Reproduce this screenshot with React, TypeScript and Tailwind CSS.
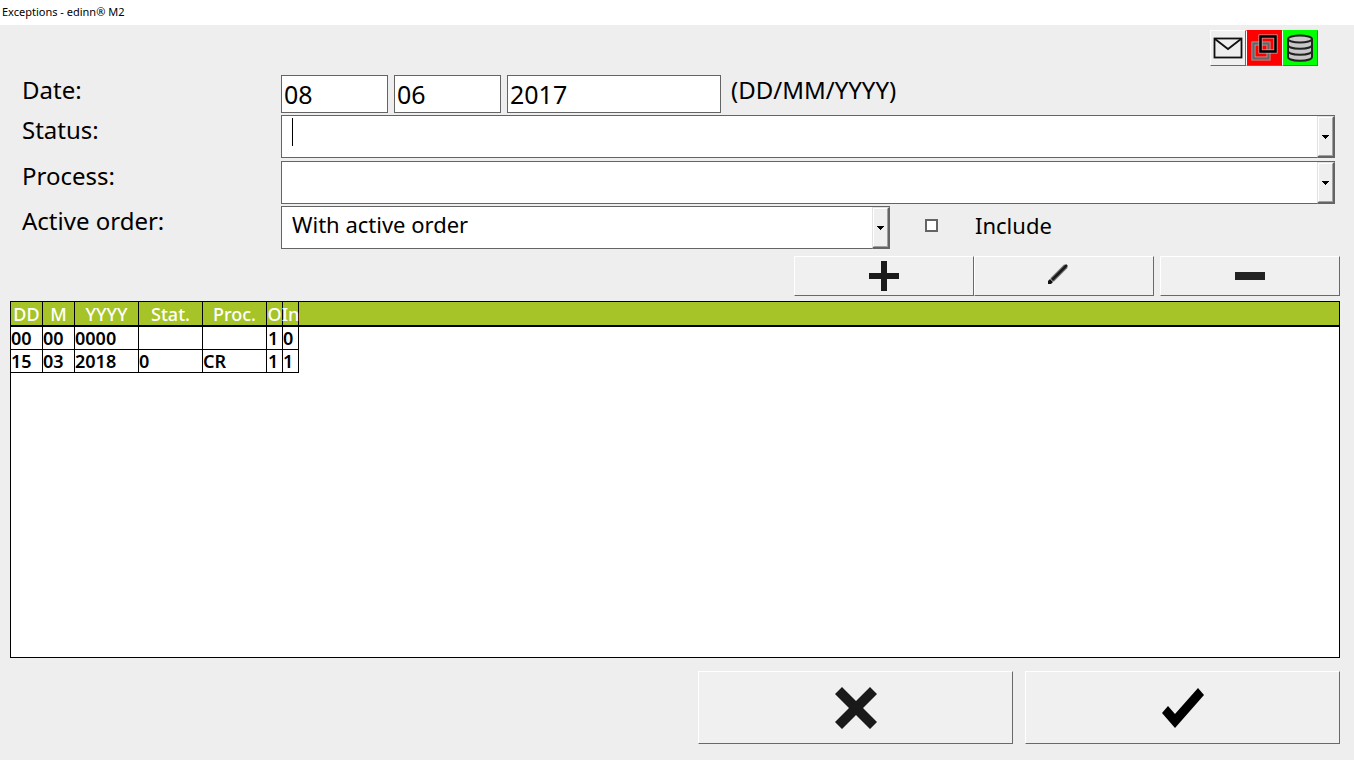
import { useState } from 'react';
import type { ReactNode } from 'react';
import clsx from 'clsx';

const columns = [
  { label: 'DD', width: 'w-[32px]' },
  { label: 'M', width: 'w-[32px]' },
  { label: 'YYYY', width: 'w-[64px]' },
  { label: 'Stat.', width: 'w-[64px]' },
  { label: 'Proc.', width: 'w-[64px]' },
  { label: 'O', width: 'w-[16px]' },
  { label: 'In', width: 'w-[16px]' },
];

const rows = [
  ['00', '00', '0000', '', '', '1', '0'],
  ['15', '03', '2018', '0', 'CR', '1', '1'],
];

const raised = 'border border-t-white border-l-white border-r-[#696969] border-b-[#696969]';

function PushButton({
  label,
  className,
  children,
}: {
  label: string;
  className?: string;
  children: ReactNode;
}) {
  return (
    <button
      type="button"
      aria-label={label}
      className={clsx('flex items-center justify-center', raised, className)}
    >
      {children}
    </button>
  );
}

function Combo({
  id,
  options,
  caret,
  className,
}: {
  id: string;
  options: string[];
  caret?: boolean;
  className?: string;
}) {
  return (
    <div className={clsx('relative h-[43px]', className)}>
      <select
        id={id}
        className="h-full w-full appearance-none border border-[#646464] bg-white pr-5 pb-2 pl-[10px] text-[22px] leading-8 outline-none"
      >
        {options.map((option) => (
          <option key={option}>{option}</option>
        ))}
      </select>
      {caret && <span className="absolute top-[3px] left-[11px] h-7 w-px bg-black" />}
      <span className="pointer-events-none absolute top-px right-0 bottom-0 w-[18px] border-t border-r-2 border-b-2 border-l border-t-[#e3e3e3] border-r-[#646464] border-b-[#646464] border-l-[#e3e3e3]">
        <span className="flex h-full w-full items-center justify-center border border-t-white border-r-[#a0a0a0] border-b-[#a0a0a0] border-l-white bg-[#efefef]">
          <svg width="7" height="4" viewBox="0 0 7 4" shapeRendering="crispEdges">
            <path d="M0 0h7v1h-1v1h-1v1h-1v1h-1v-1h-1v-1h-1v-1h-1z" fill="#000" />
          </svg>
        </span>
      </span>
    </div>
  );
}

function Toolbar() {
  return (
    <div className="flex justify-end pr-9">
      <PushButton label="Messages" className="size-9 bg-[#f0f0f0]">
        <svg width="30" height="22" viewBox="0 0 30 22" fill="none" stroke="#111">
          <rect x="1.5" y="1.5" width="27" height="19" fill="#eee" strokeWidth="1.8" />
          <path d="M2 2l13 10L28 2" strokeWidth="1.8" />
        </svg>
      </PushButton>
      <PushButton label="Windows" className="size-9 border-t-[#f00]! border-r-[#f00]! bg-[#f00]">
        <svg width="28" height="28" viewBox="0 0 28 28" fill="none">
          <rect x="3.5" y="9.5" width="15" height="15" stroke="#b9a0a0" strokeWidth="4" />
          <rect x="3.5" y="9.5" width="15" height="15" stroke="#666" strokeWidth="2.4" />
          <rect x="10.5" y="2.5" width="15" height="15" stroke="#c9b0b0" strokeWidth="4" />
          <rect x="10.5" y="2.5" width="15" height="15" stroke="#000" strokeWidth="2.6" />
        </svg>
      </PushButton>
      <PushButton label="Database" className="size-9 border-t-[#0f0]! bg-[#0f0]">
        <svg width="28" height="28" viewBox="0 0 28 28" stroke="#222" strokeWidth="2">
          <path d="M2 5v18c0 5 24 5 24 0V5" fill="#c8c8c8" />
          <ellipse cx="14" cy="5" rx="12" ry="3.5" fill="#ccc" />
          <path d="M2 11c0 5 24 5 24 0M2 17c0 5 24 5 24 0" fill="none" />
        </svg>
      </PushButton>
    </div>
  );
}

function ExceptionsTable() {
  return (
    <div className="mr-[14px] ml-[10px] min-h-[200px] flex-1 border border-black bg-white">
      <table className="w-full table-fixed border-separate border-spacing-0 text-[18px] leading-5 whitespace-nowrap">
        <thead>
          <tr className="h-[25px] bg-[#a6c428] text-white">
            {columns.map((column) => (
              <th
                key={column.label}
                scope="col"
                className={clsx(
                  'border-r border-b-2 border-black p-0 text-center font-medium',
                  column.width,
                )}
              >
                <span className="flex justify-center">{column.label}</span>
              </th>
            ))}
            <td className="border-b-2 border-black p-0" />
          </tr>
        </thead>
        <tbody>
          {rows.map((row, i) => (
            <tr key={i} className="h-[23px]">
              {row.map((value, j) => (
                <td
                  key={j}
                  className={clsx(
                    'border-r border-b border-black p-0 font-semibold',
                    j === 5 && 'pl-px',
                  )}
                >
                  {value}
                </td>
              ))}
            </tr>
          ))}
        </tbody>
      </table>
    </div>
  );
}

export default function App() {
  const [date, setDate] = useState({ day: '08', month: '06', year: '2017' });
  const [include, setInclude] = useState(false);

  const dateInput = 'h-[38px] border border-[#646464] bg-white px-[2px] text-[25px] outline-none';

  return (
    <div className="flex min-h-screen flex-col bg-[#eeeeee] font-['Noto_Sans',sans-serif] text-black">
      <header className="h-[25px] bg-white pl-[2px] text-[11px] leading-6">
        <h1>Exceptions - edinn® M2</h1>
      </header>

      <main className="flex flex-1 flex-col pt-[5px] pb-4">
        <Toolbar />

        <form className="mt-[9px] flex flex-col gap-[2px] pr-[19px] pl-[22px] text-[24px] leading-[30px]">
          <div className="flex">
            <label htmlFor="day" className="w-[259px] shrink-0">
              Date:
            </label>
            <div className="flex gap-[6px]">
              <input
                id="day"
                aria-label="Day"
                value={date.day}
                onChange={(e) => setDate({ ...date, day: e.target.value })}
                className={clsx(dateInput, 'w-[107px]')}
              />
              <input
                aria-label="Month"
                value={date.month}
                onChange={(e) => setDate({ ...date, month: e.target.value })}
                className={clsx(dateInput, 'w-[107px]')}
              />
              <input
                aria-label="Year"
                value={date.year}
                onChange={(e) => setDate({ ...date, year: e.target.value })}
                className={clsx(dateInput, 'w-[214px]')}
              />
            </div>
            <span className="pl-[10px]">(DD/MM/YYYY)</span>
          </div>

          <div className="flex">
            <label htmlFor="status" className="w-[259px] shrink-0">
              Status:
            </label>
            <Combo id="status" options={['']} caret className="flex-1" />
          </div>

          <div className="mt-px flex">
            <label htmlFor="process" className="w-[259px] shrink-0">
              Process:
            </label>
            <Combo id="process" options={['']} className="flex-1" />
          </div>

          <div className="flex">
            <label htmlFor="order" className="w-[259px] shrink-0">
              Active order:
            </label>
            <Combo
              id="order"
              options={['With active order', 'Without active order']}
              className="w-[609px]"
            />
            <label className="flex h-[38px] items-center gap-[37px] pl-[35px] text-[22px]">
              <input
                type="checkbox"
                checked={include}
                onChange={(e) => setInclude(e.target.checked)}
                className="size-[13px] appearance-none border-2 border-[#646464] bg-white checked:bg-black"
              />
              Include
            </label>
          </div>
        </form>

        {/* Row actions */}
        <div className="mt-[7px] mb-[5px] flex justify-end pr-[14px]">
          <PushButton label="Add" className="h-10 w-[180px] bg-[#f0f0f0]">
            <svg width="30" height="30" viewBox="0 0 30 30">
              <path d="M12 0h6v12h12v6H18v12h-6V18H0v-6h12z" fill="#1a1a1a" />
            </svg>
          </PushButton>
          <PushButton label="Edit" className="h-10 w-[180px] bg-[#f0f0f0] pr-3 pb-1">
            <svg width="22" height="22" viewBox="0 0 22 22">
              <path d="M5 17L19 3" stroke="#777" strokeWidth="5" />
              <path d="M5 17L20 2" stroke="#1a1a1a" strokeWidth="2.6" />
              <path d="M1 18l2-2 3 3-2 2H1z" fill="#111" />
            </svg>
          </PushButton>
          <PushButton label="Remove" className="ml-[6px] h-10 w-[180px] bg-[#f0f0f0]">
            <svg width="30" height="8" viewBox="0 0 30 8">
              <path d="M0 0h30v8H0z" fill="#222" />
            </svg>
          </PushButton>
        </div>

        <ExceptionsTable />

        <div className="mt-[13px] flex justify-end gap-3 pr-[14px]">
          <PushButton label="Cancel" className="h-[73px] w-[315px] bg-[#f0f0f0]">
            <svg width="42" height="42" viewBox="0 0 42 42">
              <path
                d="M7 0L21 14 35 0l7 7L28 21l14 14-7 7L21 28 7 42l-7-7L14 21 0 7z"
                fill="#1a1a1a"
              />
            </svg>
          </PushButton>
          <PushButton label="Accept" className="h-[73px] w-[315px] bg-[#f0f0f0]">
            <svg width="42" height="40" viewBox="0 0 42 40">
              <path d="M36 0l6 7-29 33L0 25l6-7 7 8z" fill="#000" />
            </svg>
          </PushButton>
        </div>
      </main>
    </div>
  );
}
